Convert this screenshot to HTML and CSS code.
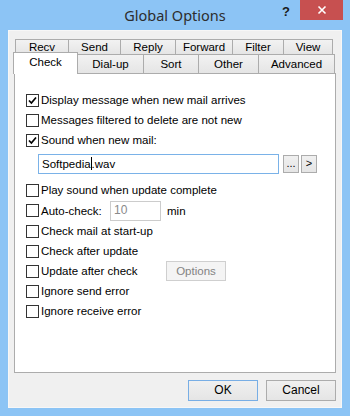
FILE: index.html
```html
<!DOCTYPE html>
<html>
<head>
<meta charset="utf-8">
<link rel="stylesheet" href="styles.css">
</head>
<body>
<div class="window">
  <div class="titlebar">
    <div class="tb-side"></div>
    <div class="title">Global Options</div>
    <div class="tb-side tb-right">
      <div class="help">?</div>
      <div class="close"><svg width="10" height="10" viewBox="0 0 10 10"><path d="M1.5 1.5 L8.5 8.5 M8.5 1.5 L1.5 8.5" stroke="#fff" stroke-width="1.6" fill="none"/></svg></div>
    </div>
  </div>
  <div class="client">
    <div class="tabs">
      <div class="tabrow row1">
        <div class="tab t-recv">Recv</div>
        <div class="tab t-send">Send</div>
        <div class="tab t-reply">Reply</div>
        <div class="tab t-forward">Forward</div>
        <div class="tab t-filter">Filter</div>
        <div class="tab t-view last">View</div>
      </div>
      <div class="tabrow row2">
        <div class="tab t-check selected">Check</div>
        <div class="tab t-dial">Dial-up</div>
        <div class="tab t-sort">Sort</div>
        <div class="tab t-other">Other</div>
        <div class="tab t-adv last">Advanced</div>
      </div>
    </div>
    <div class="panel">
      <div class="row first"><span class="cb checked"><svg width="11" height="11" viewBox="0 0 11 11"><path d="M2 5.5 L4.4 8 L9 2.5" stroke="#000" stroke-width="1.7" fill="none"/></svg></span><span>Display message when new mail arrives</span></div>
      <div class="row"><span class="cb"></span><span>Messages filtered to delete are not new</span></div>
      <div class="row"><span class="cb checked"><svg width="11" height="11" viewBox="0 0 11 11"><path d="M2 5.5 L4.4 8 L9 2.5" stroke="#000" stroke-width="1.7" fill="none"/></svg></span><span>Sound when new mail:</span></div>
      <div class="fieldrow">
        <div class="field">Softpedia<span class="caret"></span>.wav</div>
        <div class="smallbtn">...</div>
        <div class="smallbtn">&gt;</div>
      </div>
      <div class="row after-field"><span class="cb"></span><span>Play sound when update complete</span></div>
      <div class="row tall"><span class="cb"></span><span class="lbl-auto">Auto-check:</span><span class="numbox">10</span><span class="min">min</span></div>
      <div class="row"><span class="cb"></span><span>Check mail at start-up</span></div>
      <div class="row"><span class="cb"></span><span>Check after update</span></div>
      <div class="row"><span class="cb"></span><span class="lbl-upd">Update after check</span><span class="optbtn">Options</span></div>
      <div class="row"><span class="cb"></span><span>Ignore send error</span></div>
      <div class="row"><span class="cb"></span><span>Ignore receive error</span></div>
    </div>
    <div class="buttons">
      <div class="btn default">OK</div>
      <div class="btn">Cancel</div>
    </div>
  </div>
</div>
</body>
</html>
```
FILE: styles.css
```css
html, body {
  margin: 0;
  padding: 0;
}
body {
  width: 350px;
  height: 416px;
  overflow: hidden;
  background: #8cc4f5;
  font-family: "Liberation Sans", Arial, sans-serif;
  font-size: 11.5px;
  color: #000;
}
.window {
  width: 350px;
  height: 416px;
  background: #8cc4f5;
  display: flex;
  flex-direction: column;
}
.titlebar {
  height: 30px;
  display: grid;
  grid-template-columns: 1fr auto 1fr;
}
.title {
  font-family: "Noto Sans", "Open Sans", sans-serif;
  font-size: 14.5px;
  color: #2d2d2d;
  line-height: 30px;
}
.tb-right {
  display: flex;
  justify-content: flex-end;
  align-items: flex-start;
}
.help {
  width: 14px;
  height: 22px;
  margin-right: 7px;
  font-family: "Liberation Sans", Arial, sans-serif;
  font-weight: bold;
  font-size: 13px;
  line-height: 24px;
  text-align: center;
  color: #1a1a1a;
}
.close {
  width: 43px;
  height: 20px;
  margin-right: 7px;
  background: #c75050;
  display: flex;
  align-items: center;
  justify-content: center;
}
.client {
  margin: 0 8px;
  height: 378px;
  box-sizing: border-box;
  background: #f0f0f0;
  border: 1px solid #f7f7f7;
  padding: 8px 5px 6px 5px;
  display: flex;
  flex-direction: column;
}
.tabs {
  display: flex;
  flex-direction: column;
}
.tabrow {
  display: flex;
}
.row1 {
  height: 15px;
  padding-left: 1px;
}
.row2 {
  height: 19px;
  margin-left: -1px;
}
.tab {
  box-sizing: border-box;
  border-top: 1px solid #acacac;
  border-left: 1px solid #acacac;
  background: linear-gradient(#f2f2f2, #e5e5e5);
  text-align: center;
  white-space: nowrap;
}
.tab.last {
  border-right: 1px solid #acacac;
}
.row1 .tab {
  height: 15px;
  line-height: 14px;
}
.row2 .tab {
  height: 19px;
  line-height: 18px;
}
.row2 .tab.selected {
  height: 22px;
  margin-top: -2px;
  margin-bottom: -1px;
  line-height: 19px;
  background: #fff;
  border-right: 1px solid #acacac;
  position: relative;
  z-index: 1;
}
.t-recv { width: 53px; }
.t-send { width: 52px; }
.t-reply { width: 55px; }
.t-forward { width: 57px; }
.t-filter { width: 51px; }
.t-view { width: 50px; }
.t-check { width: 65px; }
.t-dial { width: 66px; margin-left: -1px; }
.t-sort { width: 55px; }
.t-other { width: 60px; }
.t-adv { width: 77px; }

.panel {
  height: 300px;
  box-sizing: border-box;
  background: #fff;
  border: 1px solid #acacac;
  padding: 16px 10px 0 11px;
  display: flex;
  flex-direction: column;
}
.row {
  height: 20px;
  display: flex;
  align-items: center;
  white-space: nowrap;
}
.row.tall {
  height: 21px;
}
.row.after-field {
  margin-top: 6px;
}
.cb {
  width: 13px;
  height: 13px;
  box-sizing: border-box;
  border: 1px solid #333;
  background: #fff;
  margin-right: 2px;
  flex: none;
  display: flex;
  align-items: center;
  justify-content: center;
}
.fieldrow {
  display: flex;
  align-items: center;
  margin-top: 4px;
  height: 20px;
  padding-left: 12px;
}
.field {
  width: 241px;
  height: 20px;
  box-sizing: border-box;
  border: 1px solid #7ab2e8;
  padding-left: 3px;
  line-height: 18px;
  background: #fff;
}
.caret {
  display: inline-block;
  width: 1px;
  height: 13px;
  background: #000;
  vertical-align: -2px;
}
.smallbtn {
  width: 16px;
  height: 18px;
  box-sizing: border-box;
  border: 1px solid #acacac;
  background: linear-gradient(#f0f0f0, #e5e5e5);
  margin-left: 4px;
  text-align: center;
  line-height: 15px;
  font-size: 11px;
}
.smallbtn + .smallbtn {
  margin-left: 2px;
}
.lbl-auto {
  width: 69px;
}
.numbox {
  width: 51px;
  height: 20px;
  box-sizing: border-box;
  border: 1px solid #cccccc;
  background: #fff;
  color: #8a8a8a;
  padding-left: 3px;
  line-height: 17px;
  font-size: 12px;
}
.min {
  margin-left: 6px;
}
.lbl-upd {
  width: 125px;
}
.optbtn {
  width: 60px;
  height: 20px;
  box-sizing: border-box;
  border: 1px solid #cfcfcf;
  background: #f4f4f4;
  color: #838383;
  text-align: center;
  line-height: 18px;
}
.buttons {
  margin-top: 7px;
  display: flex;
  justify-content: flex-end;
  gap: 8px;
}
.btn {
  width: 70px;
  height: 21px;
  box-sizing: border-box;
  border: 1px solid #acacac;
  background: linear-gradient(#f0f0f0, #e5e5e5);
  text-align: center;
  line-height: 19px;
  font-size: 12px;
}
.btn.default {
  border-color: #78aee5;
}
```
